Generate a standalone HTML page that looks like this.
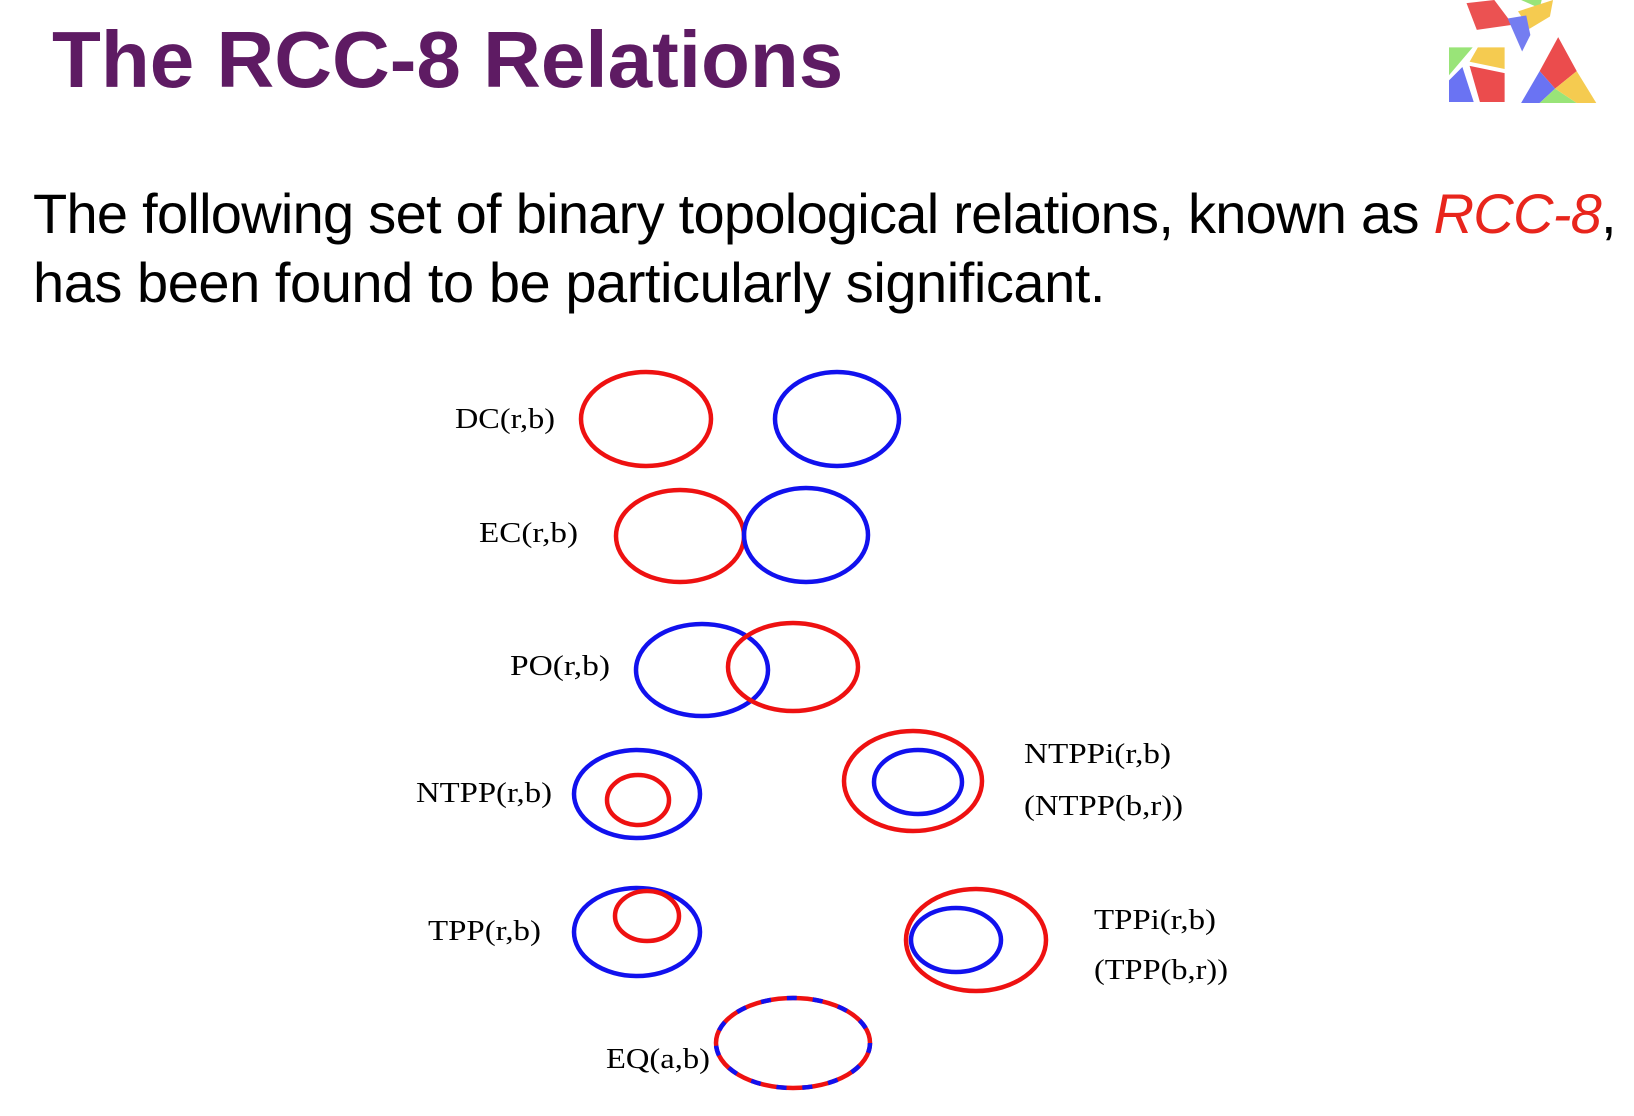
<!DOCTYPE html>
<html><head><meta charset="utf-8"><style>
html,body{margin:0;padding:0;background:#fff;width:1634px;height:1116px;overflow:hidden;position:relative}
.t{position:absolute;left:52px;top:0;font:bold 80px "Liberation Sans",sans-serif;color:#5e1b63;line-height:1;white-space:nowrap}
.b{position:absolute;left:33px;font:56px "Liberation Sans",sans-serif;letter-spacing:-0.65px;color:#000;white-space:nowrap;line-height:1}
svg{position:absolute;left:0;top:0}
</style></head><body>
<div class="t" style="top:20px">The RCC-8 Relations</div>
<div class="b" style="top:186px;letter-spacing:-0.73px">The following set of binary topological relations, known as <i style="color:#e8251c">RCC-8</i>,</div>
<div class="b" style="top:255px;letter-spacing:-0.45px">has been found to be particularly significant.</div>
<svg width="1634" height="1116">
<g opacity="0.9" transform="translate(1449,0) scale(1.03) translate(-1447,0)">
<polygon points="1464,3 1491,0 1509,24 1474,29" fill="#e94040"/>
<polygon points="1517,0 1537,0 1535,8" fill="#8ee26a"/>
<polygon points="1514,11 1548,0 1545,16 1525,28" fill="#f4c63e"/>
<polygon points="1504,18 1522,15 1526,34 1518,50" fill="#6670f0"/>
<polygon points="1447,46 1470,46 1447,73" fill="#8ee26a"/>
<polygon points="1475,46 1501,46 1501,67 1467,60" fill="#f4c63e"/>
<polygon points="1447,78 1460,65 1471,99 1447,99" fill="#5a64f2"/>
<polygon points="1467,64 1501,71 1501,99 1477,99" fill="#e9393a"/>
<polygon points="1553,36 1535,69 1550,86 1571,69" fill="#e9393a"/>
<polygon points="1535,69 1550,86 1535,100 1517,100" fill="#5a64f2"/>
<polygon points="1550,86 1535,100 1571,100" fill="#8ee26a"/>
<polygon points="1571,69 1590,100 1571,100 1550,86" fill="#f4c63e"/>
</g>
<g transform="translate(-3,-3)">
<g fill="none" stroke-width="4.5">
<ellipse cx="649" cy="422" rx="65" ry="47" stroke="#ee1111"/>
<ellipse cx="840" cy="422" rx="62" ry="47" stroke="#1111ee"/>
<ellipse cx="683" cy="539" rx="64" ry="46" stroke="#ee1111"/>
<ellipse cx="809" cy="538" rx="62" ry="47" stroke="#1111ee"/>
<ellipse cx="705" cy="673" rx="66" ry="46" stroke="#1111ee"/>
<ellipse cx="796" cy="670" rx="65" ry="44" stroke="#ee1111"/>
<ellipse cx="640" cy="797" rx="63" ry="44" stroke="#1111ee"/>
<ellipse cx="641" cy="803" rx="31" ry="25" stroke="#ee1111"/>
<ellipse cx="916" cy="784" rx="69" ry="50" stroke="#ee1111"/>
<ellipse cx="921" cy="785" rx="44" ry="32" stroke="#1111ee"/>
<ellipse cx="640" cy="935" rx="63" ry="44" stroke="#1111ee"/>
<ellipse cx="650" cy="919" rx="32" ry="25" stroke="#ee1111"/>
<ellipse cx="979" cy="943" rx="70" ry="51" stroke="#ee1111"/>
<ellipse cx="959" cy="943" rx="45" ry="32" stroke="#1111ee"/>
<ellipse cx="796" cy="1046" rx="77" ry="45" stroke="#ee1111"/>
<ellipse cx="796" cy="1046" rx="77" ry="45" stroke="#1111ee" stroke-dasharray="10 16"/>
</g>
<g font-family="Liberation Serif, serif" font-size="29" fill="#000">
<text x="458" y="431" textLength="100" lengthAdjust="spacingAndGlyphs">DC(r,b)</text>
<text x="482" y="545" textLength="99" lengthAdjust="spacingAndGlyphs">EC(r,b)</text>
<text x="513" y="678" textLength="100" lengthAdjust="spacingAndGlyphs">PO(r,b)</text>
<text x="419" y="805" textLength="136" lengthAdjust="spacingAndGlyphs">NTPP(r,b)</text>
<text x="1027" y="766" textLength="147" lengthAdjust="spacingAndGlyphs">NTPPi(r,b)</text>
<text x="1027" y="818" textLength="159" lengthAdjust="spacingAndGlyphs">(NTPP(b,r))</text>
<text x="431" y="943" textLength="113" lengthAdjust="spacingAndGlyphs">TPP(r,b)</text>
<text x="1097" y="932" textLength="122" lengthAdjust="spacingAndGlyphs">TPPi(r,b)</text>
<text x="1097" y="982" textLength="134" lengthAdjust="spacingAndGlyphs">(TPP(b,r))</text>
<text x="609" y="1071" textLength="104" lengthAdjust="spacingAndGlyphs">EQ(a,b)</text>
</g>
</g>
</svg>
</body></html>
